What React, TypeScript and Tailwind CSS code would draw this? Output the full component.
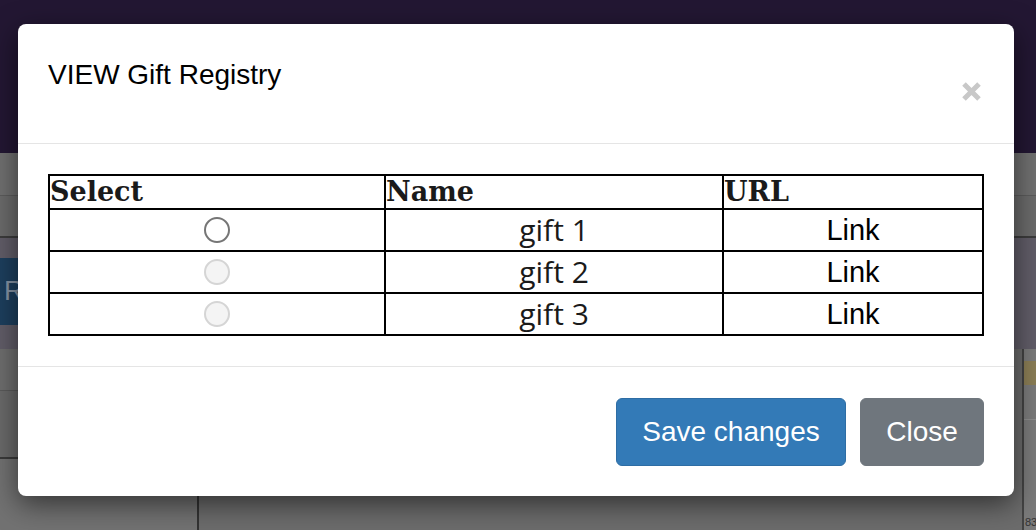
import React from "react";

const rows = [
    { name: "gift 1", enabled: true },
    { name: "gift 2", enabled: false },
    { name: "gift 3", enabled: false },
];

const Backdrop = () => (
    <div className="h-[530px] w-full overflow-hidden bg-[#6d6d6d]">
        <div className="h-[153px] bg-[#231733]" />
        <div className="h-[43px] border-b border-[#5c5c5c] bg-[#707070]" />
        <div className="h-[42px] border-b-2 border-[#3c3c3c] bg-[#6b6b6b]" />
        <div className="h-[111px] bg-[#615d68] pt-[20px]">
            <div className="flex h-[67px] w-[40px] items-center bg-[#1d3f5e] pl-[4px] font-['Liberation_Sans',sans-serif] text-[27px] text-[#8795a6]">
                R
            </div>
        </div>
        <div className="flex h-[181px]">
            <div className="flex w-[199px] flex-col border-r-2 border-[#333]">
                <div className="h-[42px] border-b border-[#5a5a5a] bg-[#6e6e6e]" />
                <div className="h-[68px] border-b-2 border-[#3a3a3a] bg-[#6a6a6a]" />
                <div className="flex-1 bg-[#727272]" />
            </div>
            <div className="flex-1 bg-[#6c6c6c]" />
            <div className="flex w-[14px] flex-col border-l-2 border-[#444] bg-[#7a7a7a]">
                <div className="mt-[12px] h-[24px] bg-[#8a7d55]" />
                <div className="mt-[34px] h-px bg-[#8c8c8c]" />
                <div className="mt-auto pl-px font-['Liberation_Sans',sans-serif] text-[11px] leading-[16px] text-[#333]">
                    83
                </div>
            </div>
        </div>
    </div>
);

const Radio = ({ enabled }: { enabled: boolean }) => (
    <input
        type="radio"
        name="gift"
        disabled={!enabled}
        className={
            enabled
                ? "m-0 block h-[26px] w-[26px] appearance-none rounded-full border-2 border-[#767676] bg-white"
                : "m-0 block h-[26px] w-[26px] appearance-none rounded-full border-2 border-[#d5d5d5] bg-[#f4f4f4]"
        }
    />
);

const App = () => {
    const thClass =
        "h-[34px] border-2 border-black p-0 text-left align-middle font-['DejaVu_Serif',serif] text-[27px] font-bold leading-[30px] text-[#1a1a1a]";
    const tdClass = "h-[42px] border-2 border-black p-0 text-center align-middle";

    return (
        <div className="relative">
            <Backdrop />

            <div className="absolute inset-0 pl-[18px] pt-[24px]">
                <div className="w-[996px] rounded-[8px] bg-white shadow-[0_8px_28px_rgba(0,0,0,0.55)]">
                    <div className="flex h-[120px] items-start justify-between border-b border-[#e5e5e5] pl-[30px] pr-[32px] pt-[35px]">
                        <h4 className="font-['Liberation_Sans',sans-serif] text-[28px] leading-[32px] text-black">
                            VIEW Gift Registry
                        </h4>
                        <button className="mt-[22px] text-[#c8c8c8]">
                            <svg width="21" height="21" viewBox="0 0 21 21">
                                <path
                                    d="M3 3 L18 18 M18 3 L3 18"
                                    stroke="currentColor"
                                    strokeWidth="5"
                                    strokeLinecap="butt"
                                />
                            </svg>
                        </button>
                    </div>

                    <div className="px-[30px] py-[30px]">
                        <table className="w-[936px] border-collapse border-2 border-black">
                            <thead>
                                <tr>
                                    <th className={`${thClass} w-[336px]`}>Select</th>
                                    <th className={`${thClass} w-[338px]`}>Name</th>
                                    <th className={thClass}>URL</th>
                                </tr>
                            </thead>
                            <tbody>
                                {rows.map((r) => (
                                    <tr key={r.name}>
                                        <td className={tdClass}>
                                            <div className="flex justify-center">
                                                <Radio enabled={r.enabled} />
                                            </div>
                                        </td>
                                        <td
                                            className={`${tdClass} font-['Open_Sans',sans-serif] text-[30px] leading-[36px] text-[#1a1a1a]`}
                                        >
                                            {r.name}
                                        </td>
                                        <td
                                            className={`${tdClass} font-['Liberation_Sans',sans-serif] text-[29px] leading-[36px] text-black`}
                                        >
                                            Link
                                        </td>
                                    </tr>
                                ))}
                            </tbody>
                        </table>
                    </div>

                    <div className="flex justify-end gap-[14px] border-t border-[#e5e5e5] pb-[30px] pr-[30px] pt-[31px]">
                        <button className="h-[68px] w-[230px] rounded-[6px] border border-[#2e6da4] bg-[#337ab7] font-['Liberation_Sans',sans-serif] text-[28px] text-white">
                            Save changes
                        </button>
                        <button className="h-[68px] w-[124px] rounded-[6px] border border-[#6f767d] bg-[#6f767d] font-['Liberation_Sans',sans-serif] text-[28px] text-white">
                            Close
                        </button>
                    </div>
                </div>
            </div>
        </div>
    );
};

export default App;
